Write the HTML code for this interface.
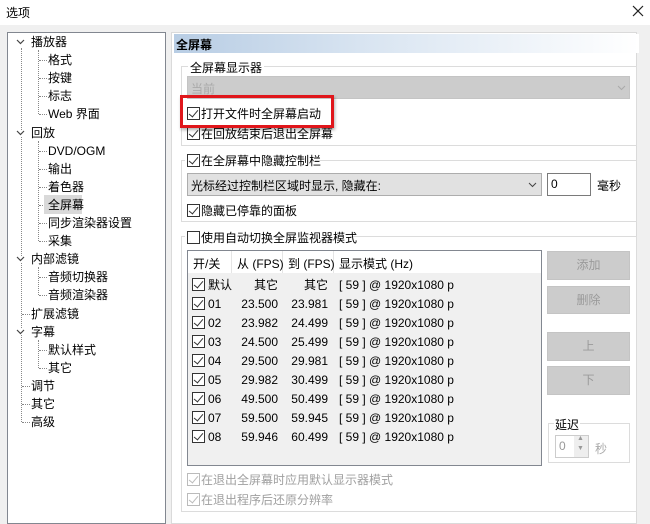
<!DOCTYPE html><html><head><meta charset="utf-8"><style>
*{margin:0;padding:0;box-sizing:border-box}
body{width:650px;height:522px;overflow:hidden;background:#f0f0f0;font-family:"Liberation Sans","Noto Sans CJK SC",sans-serif;font-size:12px;color:#000;position:relative}
.a{position:absolute;white-space:nowrap}
.cb{position:absolute;width:13px;height:13px;border:1px solid #333;background:#fff}
.cb.c::after{content:"";position:absolute;left:3px;top:0px;width:4px;height:8px;border:solid #333;border-width:0 1.5px 1.5px 0;transform:rotate(40deg)}
.cb.d{border-color:#bbb}.cb.d::after{border-color:#bbb}
.gb{position:absolute;border:1px solid #dcdcdc}
.btn{position:absolute;background:#cccccc;border:1px solid #c4c4c4;color:#9a9a9a;text-align:center}
.dl{position:absolute;border-left:1px dotted #888}
.dh{position:absolute;border-top:1px dotted #888;width:8px}
.t0,.t1{position:absolute;white-space:nowrap;line-height:16px}
.t0{left:31px}.t1{left:48px}
.chev{position:absolute;left:16px;width:9px;height:6px}
</style></head><body>
<div class="a" style="left:0;top:0;width:650px;height:25px;background:#fff"></div>
<div class="a" style="left:6px;top:4px;font-size:12px">选项</div>
<svg class="a" style="left:632px;top:5px" width="12" height="12"><path d="M1 1L11 11M11 1L1 11" stroke="#222" stroke-width="1.2"/></svg>

<div class="a" style="left:7px;top:32px;width:159px;height:492px;background:#fff;border:1px solid #828790"></div>
<div class="a" style="left:171px;top:32px;width:466px;height:492px;background:#fff;border:1px solid #dadada"></div>

<!-- tree lines -->
<div class="dl" style="left:21px;top:48px;height:374px"></div>
<div class="dl" style="left:38px;top:50px;height:64px"></div>
<div class="dl" style="left:38px;top:141px;height:100px"></div>
<div class="dl" style="left:38px;top:267px;height:28px"></div>
<div class="dl" style="left:38px;top:340px;height:28px"></div>
<div class="dh" style="left:39px;top:60px"></div><div class="dh" style="left:39px;top:78px"></div><div class="dh" style="left:39px;top:96px"></div><div class="dh" style="left:39px;top:114px"></div>
<div class="dh" style="left:39px;top:151px"></div><div class="dh" style="left:39px;top:169px"></div><div class="dh" style="left:39px;top:187px"></div><div class="dh" style="left:39px;top:205px"></div><div class="dh" style="left:39px;top:223px"></div><div class="dh" style="left:39px;top:241px"></div>
<div class="dh" style="left:39px;top:277px"></div><div class="dh" style="left:39px;top:295px"></div>
<div class="dh" style="left:39px;top:350px"></div><div class="dh" style="left:39px;top:368px"></div>
<div class="dh" style="left:22px;top:314px"></div><div class="dh" style="left:22px;top:386px"></div><div class="dh" style="left:22px;top:404px"></div><div class="dh" style="left:22px;top:422px"></div>
<svg class="chev" style="top:39px;background:#fff" viewBox="0 0 9 6"><path d="M1 1L4.5 4.5L8 1" fill="none" stroke="#444" stroke-width="1.2"/></svg>
<svg class="chev" style="top:130px;background:#fff" viewBox="0 0 9 6"><path d="M1 1L4.5 4.5L8 1" fill="none" stroke="#444" stroke-width="1.2"/></svg>
<svg class="chev" style="top:256px;background:#fff" viewBox="0 0 9 6"><path d="M1 1L4.5 4.5L8 1" fill="none" stroke="#444" stroke-width="1.2"/></svg>
<svg class="chev" style="top:329px;background:#fff" viewBox="0 0 9 6"><path d="M1 1L4.5 4.5L8 1" fill="none" stroke="#444" stroke-width="1.2"/></svg>
<div class="a" style="left:44px;top:195px;width:38px;height:19px;background:#d9d9d9"></div>
<div class="t0" style="top:34px">播放器</div>
<div class="t1" style="top:52px">格式</div>
<div class="t1" style="top:70px">按键</div>
<div class="t1" style="top:88px">标志</div>
<div class="t1" style="top:106px">Web 界面</div>
<div class="t0" style="top:125px">回放</div>
<div class="t1" style="top:143px">DVD/OGM</div>
<div class="t1" style="top:161px">输出</div>
<div class="t1" style="top:179px">着色器</div>
<div class="t1" style="top:197px">全屏幕</div>
<div class="t1" style="top:215px">同步渲染器设置</div>
<div class="t1" style="top:233px">采集</div>
<div class="t0" style="top:251px">内部滤镜</div>
<div class="t1" style="top:269px">音频切换器</div>
<div class="t1" style="top:287px">音频渲染器</div>
<div class="t0" style="top:306px">扩展滤镜</div>
<div class="t0" style="top:324px">字幕</div>
<div class="t1" style="top:342px">默认样式</div>
<div class="t1" style="top:360px">其它</div>
<div class="t0" style="top:378px">调节</div>
<div class="t0" style="top:396px">其它</div>
<div class="t0" style="top:414px">高级</div>

<!-- header -->
<div class="a" style="left:174px;top:34px;width:465px;height:19px;background:linear-gradient(90deg,#b8cde4,#d8e4f1 40%,#fff)"></div>
<div class="a" style="left:176px;top:36px;font-weight:bold">全屏幕</div>

<!-- group 1 -->
<div class="gb" style="left:181px;top:66px;width:456px;height:80px"></div>
<div class="a" style="left:188px;top:59px;background:#fff;padding:0 2px">全屏幕显示器</div>
<div class="a" style="left:187px;top:76px;width:443px;height:23px;background:#cccccc;border:1px solid #c4c4c4"></div>
<div class="a" style="left:191px;top:80px;color:#aaa">当前</div>
<svg class="a" style="left:617px;top:85px" width="9" height="6"><path d="M1 1L4.5 4.5L8 1" fill="none" stroke="#aaa" stroke-width="1"/></svg>
<div class="cb c" style="left:187px;top:107px"></div>
<div class="a" style="left:201px;top:105px">打开文件时全屏幕启动</div>
<div class="cb c" style="left:187px;top:127px"></div>
<div class="a" style="left:201px;top:125px">在回放结束后退出全屏幕</div>
<div class="a" style="left:180px;top:95px;width:154px;height:33px;border:3px solid #e0161b;box-shadow:1px 2px 3px rgba(0,0,0,.3)"></div>

<!-- group 2 -->
<div class="gb" style="left:181px;top:160px;width:456px;height:62px"></div>
<div class="a" style="left:185px;top:152px;background:#fff;width:130px;height:16px"></div>
<div class="cb c" style="left:187px;top:154px"></div>
<div class="a" style="left:201px;top:152px">在全屏幕中隐藏控制栏</div>
<div class="a" style="left:187px;top:173px;width:355px;height:23px;background:#e1e1e1;border:1px solid #adadad"></div>
<div class="a" style="left:191px;top:177px">光标经过控制栏区域时显示, 隐藏在:</div>
<svg class="a" style="left:528px;top:182px" width="9" height="6"><path d="M1 1L4.5 4.5L8 1" fill="none" stroke="#444" stroke-width="1"/></svg>
<div class="a" style="left:547px;top:173px;width:44px;height:23px;background:#fff;border:1px solid #7a7a7a"></div>
<div class="a" style="left:551px;top:177px">0</div>
<div class="a" style="left:597px;top:177px">毫秒</div>
<div class="cb c" style="left:187px;top:204px"></div>
<div class="a" style="left:201px;top:202px">隐藏已停靠的面板</div>

<!-- group 3 -->
<div class="gb" style="left:181px;top:236px;width:456px;height:276px"></div>
<div class="a" style="left:185px;top:229px;background:#fff;width:165px;height:16px"></div>
<div class="cb" style="left:187px;top:231px"></div>
<div class="a" style="left:201px;top:229px">使用自动切换全屏监视器模式</div>
<div class="a" style="left:187px;top:250px;width:355px;height:216px;background:#f0f0f0;border:1px solid #828790"></div>
<div class="a" style="left:188px;top:251px;width:353px;height:22px;background:#fff"></div>
<div class="a" style="left:231px;top:251px;width:1px;height:22px;background:#e5e5e5"></div>
<div class="a" style="left:282px;top:251px;width:1px;height:22px;background:#e5e5e5"></div>
<div class="a" style="left:333px;top:251px;width:1px;height:22px;background:#e5e5e5"></div>
<div class="a" style="left:193px;top:255px">开/关</div>
<div class="a" style="left:237px;top:255px">从 (FPS)</div>
<div class="a" style="left:288px;top:255px">到 (FPS)</div>
<div class="a" style="left:339px;top:255px">显示模式 (Hz)</div>
<div class="btn" style="left:547px;top:251px;width:83px;height:29px;line-height:27px">添加</div>
<div class="btn" style="left:547px;top:286px;width:83px;height:28px;line-height:26px">删除</div>
<div class="btn" style="left:547px;top:332px;width:83px;height:29px;line-height:27px">上</div>
<div class="btn" style="left:547px;top:366px;width:83px;height:29px;line-height:27px">下</div>
<div class="gb" style="left:548px;top:423px;width:82px;height:40px"></div>
<div class="a" style="left:554px;top:416px;background:#fff;padding:0 1px">延迟</div>
<div class="a" style="left:555px;top:435px;width:34px;height:23px;background:#fff;border:1px solid #ccc"></div>
<div class="a" style="left:574px;top:436px;width:14px;height:21px;background:#eee"></div>
<div class="a" style="left:559px;top:439px;color:#999">0</div>
<div class="a" style="left:577px;top:434px;font-size:7px;line-height:10px;color:#999">▲<br>▼</div>
<div class="a" style="left:595px;top:440px;color:#aaa">秒</div>
<div class="cb c d" style="left:187px;top:473px"></div>
<div class="a" style="left:201px;top:471px;color:#a0a0a0">在退出全屏幕时应用默认显示器模式</div>
<div class="cb c d" style="left:187px;top:493px"></div>
<div class="a" style="left:201px;top:491px;color:#a0a0a0">在退出程序后还原分辨率</div>

<div class="cb c" style="left:192px;top:278px"></div><div class="cb c" style="left:192px;top:297px"></div><div class="cb c" style="left:192px;top:316px"></div><div class="cb c" style="left:192px;top:335px"></div><div class="cb c" style="left:192px;top:354px"></div><div class="cb c" style="left:192px;top:373px"></div><div class="cb c" style="left:192px;top:392px"></div><div class="cb c" style="left:192px;top:411px"></div><div class="cb c" style="left:192px;top:430px"></div>
<div class="a" style="left:208px;top:276px;line-height:19px">默认<br>01<br>02<br>03<br>04<br>05<br>06<br>07<br>08</div>
<div class="a" style="left:228px;top:276px;width:50px;text-align:right;line-height:19px">其它<br>23.500<br>23.982<br>24.500<br>29.500<br>29.982<br>49.500<br>59.500<br>59.946</div>
<div class="a" style="left:278px;top:276px;width:50px;text-align:right;line-height:19px">其它<br>23.981<br>24.499<br>25.499<br>29.981<br>30.499<br>50.499<br>59.945<br>60.499</div>
<div class="a" style="left:339px;top:276px;line-height:19px">[ 59 ] @ 1920x1080 p<br>[ 59 ] @ 1920x1080 p<br>[ 59 ] @ 1920x1080 p<br>[ 59 ] @ 1920x1080 p<br>[ 59 ] @ 1920x1080 p<br>[ 59 ] @ 1920x1080 p<br>[ 59 ] @ 1920x1080 p<br>[ 59 ] @ 1920x1080 p<br>[ 59 ] @ 1920x1080 p</div>
</body></html>
